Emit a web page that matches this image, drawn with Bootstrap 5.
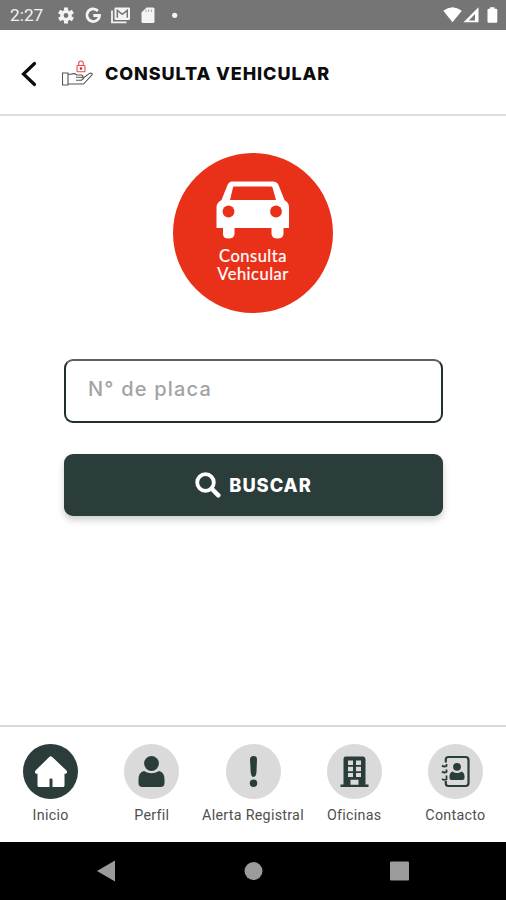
<!DOCTYPE html>
<html lang="es">
<head>
<meta charset="utf-8">
<meta name="viewport" content="width=device-width, initial-scale=1">
<title>Consulta Vehicular</title>
<link rel="stylesheet" href="https://cdn.jsdelivr.net/npm/bootstrap@5.3.0/dist/css/bootstrap.min.css">
<style>
:root{--brand:#2b3d3a;--accent:#e9311a}
body{font-family:Roboto,"Liberation Sans",sans-serif;height:900px;overflow:hidden}
svg{display:block;flex:none}
.statusbar{height:30px;background:#757575;color:#f4f4f4;padding-left:10px;padding-right:7px}
.clock{font-size:17.3px;line-height:30px;width:48px}
.topbar{height:86px;border-bottom:2px solid #dcdcdc;padding:3px 0 0 20px}
.page-title{font:800 18px/24px Inter,sans-serif;color:#0c0c0c;letter-spacing:.9px}
.hero{width:160px;height:160px;background:var(--accent);margin-top:37px;padding-top:27px}
.hero-text{font:400 16.5px/17.5px Lato,sans-serif;letter-spacing:.5px;-webkit-text-stroke:.2px #fff}
.form-area{padding:0 63px 0 64px;margin-top:46px}
.plate{height:64px;border:2px solid #1f302d;border-top-color:#5b5f5e;border-radius:9px;font:500 20px/24px Inter,sans-serif;letter-spacing:1.2px;padding:0 22px 5px}
.plate::placeholder{color:#a3a3a3;opacity:1}
.search-btn{height:62px;margin-top:31px;background:var(--brand);border:0;border-radius:9px;color:#fff;font:800 18.3px/24px Inter,sans-serif;letter-spacing:.95px;box-shadow:0 4px 7px rgba(0,0,0,.2)}
.tabs{height:117px;border-top:2px solid #d8d8d8;padding-top:17px}
.tab-item{flex:1 1 0;min-width:0;color:#4f4f4f;font-size:14.3px;line-height:18px;letter-spacing:.28px;white-space:nowrap}
.tab-disc{width:55px;height:55px;background:#dadada;color:var(--brand);margin-bottom:7px}
.tab-disc.on{background:var(--brand);color:#fff}
.sysbar{height:58px;background:#000;color:#9b9b9b;padding:0 97px}
</style>
<script src="https://cdn.jsdelivr.net/npm/bootstrap@5.3.0/dist/js/bootstrap.bundle.min.js"></script>
</head>
<body class="d-flex flex-column bg-white">
<div class="statusbar d-flex align-items-center justify-content-between flex-shrink-0">
  <div class="d-flex align-items-center">
    <span class="clock">2:27</span>
    <svg width="130" height="30" fill="currentColor" viewBox="58 0 130 30">
      <g transform="translate(66 15.5)"><circle r="4.1" fill="none" stroke="currentColor" stroke-width="3.4"/><g stroke="currentColor" stroke-width="4"><path d="M0-8V-5M0 8V5M-6.9-4L-4.4-2.5M6.9 4L4.4 2.5M-6.9 4L-4.4 2.5M6.9-4L4.4-2.5"/></g></g>
      <path d="M97.9 11A6.3 6.3 0 1 0 99.5 15.5H93.3" fill="none" stroke="currentColor" stroke-width="2.8"/>
      <path d="M112 10.5V22.3H126.5" fill="none" stroke="currentColor" stroke-width="1.8"/>
      <rect x="114.5" y="7.5" width="15.5" height="12.5" rx="1.2"/>
      <path d="M117.3 17.8V10.3L122.3 14.4L127.3 10.3V17.8" fill="none" stroke="#757575" stroke-width="1.5"/>
      <path d="M146.5 7.5H153Q154.5 7.5 154.5 9V21.5Q154.5 23 153 23H143Q141.5 23 141.5 21.5V12.5Z"/>
      <path d="M146 9.5V12M148.7 9.5V12M151.4 9.5V12" stroke="#757575" stroke-width=".6"/>
      <circle cx="174.7" cy="15.3" r="2.6"/>
    </svg>
  </div>
  <svg width="58" height="30" viewBox="441 0 58 30" fill="#fff">
    <path d="M443.3 10.8Q452.5 3.5 461.8 10.8L452.500 22.3Z"/>
    <path d="M463.5 22.3L478.5 7.3V22.3Z"/><path d="M468.8 20.5L475 14V20.5Z" fill="#757575"/>
    <path d="M490 7.3H494.500V8.8H496Q497.300 8.8 497.300 10V21.5Q497.300 22.8 496 22.8H488.7Q487.5 22.8 487.5 21.5V10Q487.5 8.8 488.7 8.8H490Z"/>
  </svg>
</div>

<header class="topbar d-flex align-items-center flex-shrink-0">
  <svg width="18" height="26" viewBox="20 60 18 26" fill="none" stroke="#0c0c0c" stroke-width="3.2" stroke-linecap="round"><path d="M34.5 62.5L23.5 73L34.5 83.5"/></svg>
  <svg class="ms-4" width="31" height="28" viewBox="62 60 31 28" fill="none" stroke="#555" stroke-width="1.1">
    <path d="M62.5 73H68V85H62.5ZM68 74.3H71Q74 72.7 77 75H81.5Q83.5 75.5 82.5 77.3H76M82.5 78.5L89.5 73.4Q92 72.5 92.3 74.5L83.5 84H68M76 80.2H81.5L84 78"/>
    <g stroke="#e8484c"><rect x="77" y="65.5" width="8" height="6.3" rx=".8"/><path d="M78.7 65.5V63.5Q78.7 61 81 61T83.3 63.5V65.5"/></g><circle cx="81" cy="68.5" r="1.2" fill="#d4161c" stroke="none"/>
  </svg>
  <h1 class="page-title mb-0 ms-2 ps-1">CONSULTA VEHICULAR</h1>
</header>

<main class="flex-grow-1 d-flex flex-column">
  <div class="hero rounded-circle mx-auto d-flex flex-column align-items-center text-white text-center">
    <svg width="74" height="60" viewBox="217 180 74 60">
      <path fill="#fff" d="M233 181.5H274Q278 181.5 279.5 185L285.5 200Q290 203 290 207V228H284.5V234Q284 238.5 278.5 238.5T272.5 234V228H235.5V234Q235 238.5 229.5 238.5T224 234V228H217.5V207Q217.5 203 222.5 200L228.5 185Q230 181.5 233 181.5Z"/>
      <path fill="#e9311a" d="M235 186.5H272Q273 186.5 273.5 187.5L277 200H231L234 187.5Q234.3 186.5 235 186.5Z"/>
      <circle cx="229.5" cy="211.5" r="5.9" fill="#e9311a"/><circle cx="277" cy="211.5" r="5.9" fill="#e9311a"/>
    </svg>
    <div class="hero-text mt-2">Consulta<br>Vehicular</div>
  </div>
  <form class="form-area">
    <input class="plate form-control" type="text" placeholder="N° de placa" aria-label="N° de placa">
    <button class="search-btn btn w-100 d-flex align-items-center justify-content-center gap-2" type="button">
      <svg width="26" height="26" viewBox="0 0 26 26" fill="none" stroke="#fff"><circle cx="10.5" cy="10.5" r="8.3" stroke-width="3.8"/><path d="M17 17L23.3 23.3" stroke-width="4.5" stroke-linecap="round"/></svg>
      <span>BUSCAR</span>
    </button>
  </form>
</main>

<nav class="tabs d-flex flex-shrink-0">
  <div class="tab-item d-flex flex-column align-items-center">
    <span class="tab-disc on rounded-circle"><svg width="55" height="55" viewBox="0 0 55 55" fill="currentColor"><path d="M26.5 12.8Q27.8 11.8 29 12.8L43.5 26.5Q45 29 42.5 29.8H41.5V41.5Q41.5 43 40 43H29.5V35.5Q29.5 34.5 28.5 34.5H27.5Q26.5 34.5 26.5 35.5V43H16Q14.5 43 14.5 41.5V29.8H13.5Q11 29 12.5 26.5Z"/></svg></span>
    <span>Inicio</span>
  </div>
  <div class="tab-item d-flex flex-column align-items-center">
    <span class="tab-disc rounded-circle"><svg width="55" height="55" viewBox="0 0 55 55" fill="currentColor"><circle cx="27.5" cy="19.5" r="7.4"/><path d="M20 27Q27.5 31.5 35 27Q40.5 28.5 40.5 35V39Q40.5 43 36.5 43H18.5Q14.5 43 14.5 39V35Q14.5 28.5 20 27Z"/></svg></span>
    <span>Perfil</span>
  </div>
  <div class="tab-item d-flex flex-column align-items-center">
    <span class="tab-disc rounded-circle"><svg width="55" height="55" viewBox="0 0 55 55" fill="currentColor"><path d="M24 15.5Q24 12 27.5 12T31 15.5L30.5 28Q30 33 27.5 33T24.7 28Z"/><circle cx="27.5" cy="39.3" r="3.7"/></svg></span>
    <span>Alerta Registral</span>
  </div>
  <div class="tab-item d-flex flex-column align-items-center">
    <span class="tab-disc rounded-circle"><svg width="55" height="55" viewBox="0 0 55 55" fill="currentColor"><path d="M18.5 12.5H35.5Q38.5 12.5 38.5 15.5V40.5H41.5V43H13.5V40.5H16.5V15.5Q16.5 12.5 18.5 12.5Z"/><path fill="#dadada" d="M21 16.5H26V21H21ZM29 16.5H34V21H29ZM21 22.7H26V27.2H21ZM29 22.7H34V27.2H29ZM21 28.9H26V33H21ZM29 28.9H34V33H29ZM23.5 35.8H31.5V40.7H23.5Z"/></svg></span>
    <span>Oficinas</span>
  </div>
  <div class="tab-item d-flex flex-column align-items-center">
    <span class="tab-disc rounded-circle"><svg width="55" height="55" viewBox="0 0 55 55" fill="currentColor"><path fill="none" stroke="currentColor" stroke-width="2.2" d="M17.8 18.5V15.5Q17.8 13 20.5 13H37.5Q40.5 13 40.5 16V39Q40.5 42 37.5 42H20.5Q17.8 42 17.8 39.5V37"/><path fill="none" d="M14 21.5Q16 23.2 18.5 22V20M14 27.5Q16 29.2 18.5 28V25.5M14 35Q16 36.5 18.5 35.5V31.5" stroke="currentColor" stroke-width="1.8"/><circle cx="29" cy="22.8" r="3.9"/><path d="M24.5 27.5Q29 30.5 33.5 27.5Q36.5 28.5 36.5 32.5V34Q36.5 36 34.5 36H23.5Q21.5 36 21.5 34V32.5Q21.5 28.5 24.5 27.5Z"/></svg></span>
    <span>Contacto</span>
  </div>
</nav>

<footer class="sysbar d-flex align-items-center justify-content-between flex-shrink-0">
  <svg width="19" height="22" viewBox="0 0 19 22" fill="currentColor"><path d="M0 11L18 .5V21.5Z"/></svg>
  <svg width="20" height="20" viewBox="0 0 20 20" fill="currentColor"><circle cx="10.5" cy="10" r="9"/></svg>
  <svg width="19" height="20" viewBox="0 0 19 20" fill="currentColor"><rect y=".5" width="19" height="19" rx="1"/></svg>
</footer>
</body>
</html>
